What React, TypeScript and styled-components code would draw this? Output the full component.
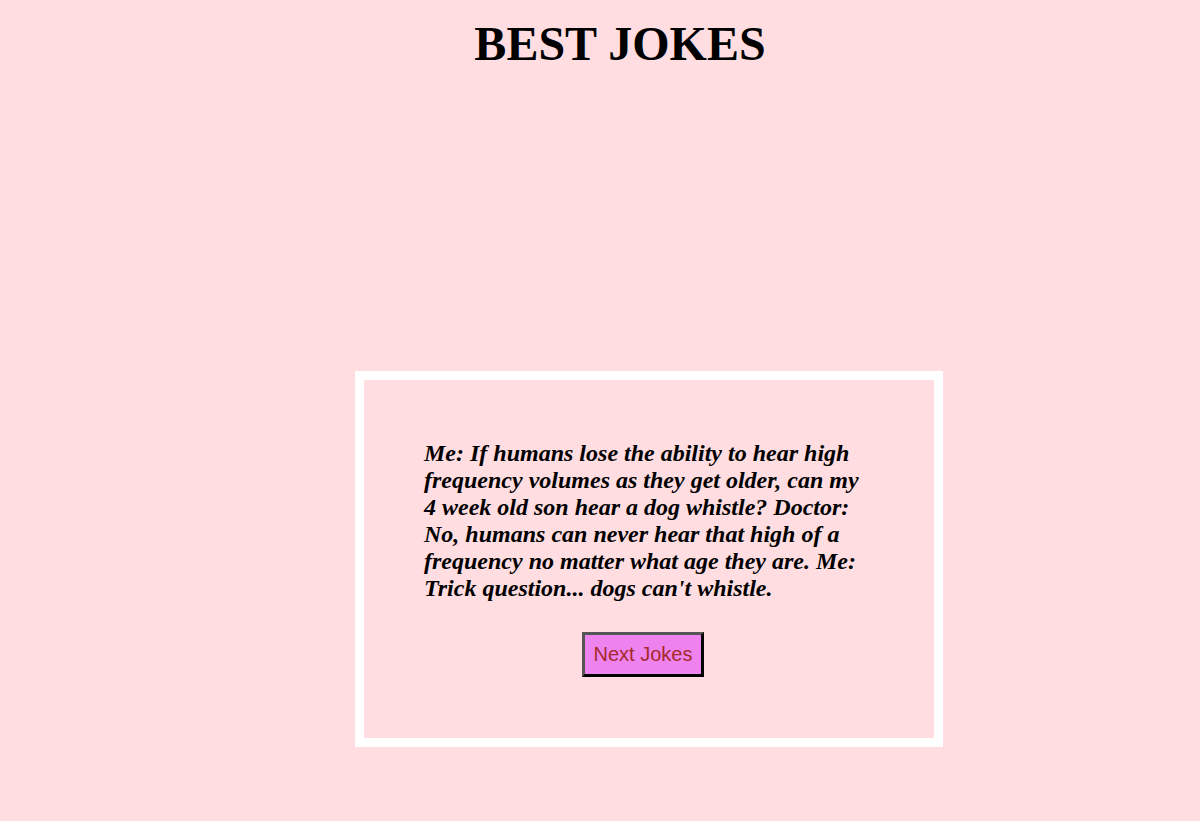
import React from "react";
import styled, { createGlobalStyle } from "styled-components";

const Global = createGlobalStyle`
  html, body { margin: 0; padding: 0; background: #ffdde1; }
  body { font-family: "Liberation Serif", "Times New Roman", serif; }
`;

const Page = styled.div`
  display: flex;
  flex-direction: column;
  padding-top: 17px;
  min-height: 821px;
  box-sizing: border-box;
`;

const Title = styled.h1`
  margin: 0 0 0 40px;
  text-align: center;
  font-family: "Liberation Serif", "Times New Roman", serif;
  font-weight: 700;
  font-size: 48px;
  line-height: 53px;
  color: #000;
`;

const Card = styled.section`
  margin: 301px 0 0 355px;
  width: 588px;
  box-sizing: border-box;
  border: 9px solid #ffffff;
  padding: 60px 60px 61px 60px;
  display: flex;
  flex-direction: column;
`;

const Joke = styled.p`
  margin: 0;
  font-family: "Liberation Serif", "Times New Roman", serif;
  font-style: italic;
  font-weight: 700;
  font-size: 24px;
  line-height: 27px;
  color: #000;
`;

const ButtonRow = styled.div`
  display: flex;
  justify-content: center;
  padding-right: 12px;
  margin-top: 30px;
`;

const NextButton = styled.button`
  font-family: "Liberation Sans", Arial, sans-serif;
  font-size: 20px;
  line-height: 23px;
  color: #a52a2a;
  background: #ee82ee;
  border: 3px solid;
  border-color: #555 #000 #000 #555;
  padding: 0 8px;
  height: 45px;
  width: 122px;
  box-sizing: border-box;
  cursor: pointer;
`;

export default function App() {
  return (
    <>
      <Global />
      <Page>
        <Title>BEST JOKES</Title>
        <Card>
          <Joke>
            Me: If humans lose the ability to hear high frequency volumes as they get older, can my 4 week old son hear a dog whistle? Doctor: No, humans can never hear that high of a frequency no matter what age they are. Me: Trick question... dogs can't whistle.
          </Joke>
          <ButtonRow>
            <NextButton>Next Jokes</NextButton>
          </ButtonRow>
        </Card>
      </Page>
    </>
  );
}
